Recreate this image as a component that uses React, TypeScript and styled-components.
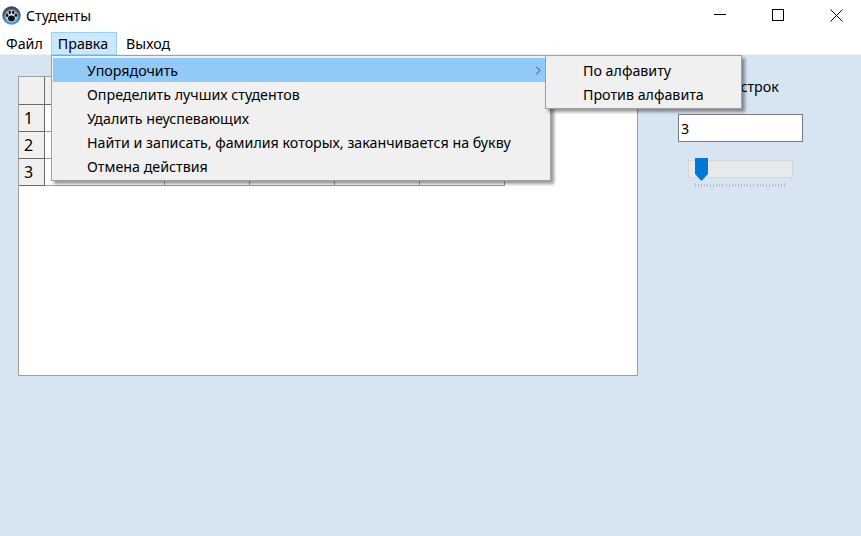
import { Fragment } from 'react'
import { createGlobalStyle, styled } from 'styled-components'

const Global = createGlobalStyle`
	html, body {
		margin: 0;
		padding: 0;
		background: #d7e4f2;
	}
`

const Window = styled.div`
	position: relative;
	width: 861px;
	height: 536px;
	overflow: hidden;
	display: flex;
	flex-direction: column;
	background: #d7e4f2;
	color: #000;
	font-family: 'Noto Sans', 'Liberation Sans', sans-serif;
	font-size: 14.25px;
`

const TitleBar = styled.div`
	height: 32px;
	flex: none;
	box-sizing: border-box;
	display: flex;
	align-items: center;
	padding: 0 0 2px 2px;
	background: #fff;
`

const Title = styled.span`
	margin-left: 5px;
`

const Caption = styled.div`
	margin-left: auto;
	margin-right: -5px;
	display: flex;
	height: 100%;
`

const CaptionButton = styled.div`
	width: 58.5px;
	display: flex;
	align-items: center;
	justify-content: center;
`

const MenuBar = styled.div`
	height: 23px;
	flex: none;
	display: flex;
	gap: 1px;
	background: #fff;
	border-bottom: 1px solid #f0f0f0;
	box-sizing: border-box;
`

const MenuTitle = styled.div<{ $open?: boolean }>`
	height: 23px;
	box-sizing: border-box;
	padding: 0 ${(p) => (p.$open ? '8px 0 6px' : '6px 0 7px')};
	display: flex;
	align-items: center;
	background: ${(p) => (p.$open ? '#cce8ff' : 'transparent')};
	border: 1px solid ${(p) => (p.$open ? '#99d1ff' : 'transparent')};

	&:first-child {
		margin-left: -2px;
	}
`

const Body = styled.div`
	flex: 1;
	display: flex;
	align-items: flex-start;
	padding: 21px 0 0 18px;
`

const GridView = styled.div`
	width: 620px;
	height: 300px;
	box-sizing: border-box;
	flex: none;
	background: #fff;
	border: 1px solid #a0a0a0;
	display: grid;
	grid-template-columns: 26px 120px repeat(4, 85px);
	grid-template-rows: 28px repeat(3, 27px);
	align-content: start;
	justify-content: start;
`

const HeaderCell = styled.div`
	box-sizing: border-box;
	background: #f0f0f0;
	border-right: 1px solid #696969;
	border-bottom: 1px solid #696969;
	padding-left: 5px;
	display: flex;
	align-items: center;
	font-size: 16px;
`

const Cell = styled.div`
	box-sizing: border-box;
	background: #fff;
	border-right: 1px solid #a0a0a0;
	border-bottom: 1px solid #a0a0a0;
`

const Side = styled.div`
	margin-left: 40px;
	width: 125px;
	display: flex;
	flex-direction: column;
`

const RowsLabel = styled.div`
	height: 38px;
	margin-left: -22px;
	white-space: nowrap;
	padding-top: 1px;
	box-sizing: border-box;
`

const CountInput = styled.div`
	height: 28px;
	box-sizing: border-box;
	background: #fff;
	border: 1px solid #7a7a7a;
	padding-left: 2px;
	display: flex;
	align-items: center;
`

const Slider = styled.div`
	position: relative;
	margin: 18px 0 0 10px;
	width: 105px;
	height: 27px;
`

const Track = styled.div`
	position: absolute;
	top: 0;
	left: 0;
	width: 105px;
	height: 18px;
	box-sizing: border-box;
	background: #e7eaea;
	border: 1px solid #d6d6d6;
`

const Thumb = styled.svg`
	position: absolute;
	left: 7px;
	top: -2px;
`

const Ticks = styled.svg`
	position: absolute;
	left: 7px;
	top: 23px;
`

const Menu = styled.div<{ $left: number; $width: number }>`
	position: absolute;
	top: 55px;
	left: ${(p) => p.$left}px;
	width: ${(p) => p.$width}px;
	box-sizing: border-box;
	padding: 2px 1px;
	background: #f0f0f0;
	border: 1px solid #a0a0a0;
	box-shadow: 3px 3px 3px rgba(0, 0, 0, 0.4);
`

const MenuItem = styled.div<{ $active?: boolean; $indent: number }>`
	position: relative;
	height: 24px;
	display: flex;
	align-items: center;
	white-space: nowrap;
	padding-left: ${(p) => p.$indent}px;
	background: ${(p) => (p.$active ? '#91c9f7' : 'transparent')};
`

const Arrow = styled.svg`
	position: absolute;
	right: 8px;
	top: 8px;
`

const ticks = Array.from({ length: 30 }, (_, i) => Math.floor(i * 3.1) + 0.5)
const columns = [0, 1, 2, 3, 4]

function App() {
	return (
		<Window>
			<Global />
			<TitleBar>
				<svg width="19" height="19" viewBox="0 0 20 20">
					<defs>
						<linearGradient id="ball" x1="0" y1="0" x2="0" y2="1">
							<stop offset="0" stopColor="#33404e" />
							<stop offset="0.5" stopColor="#4c6a86" />
							<stop offset="1" stopColor="#36a3dc" />
						</linearGradient>
						<radialGradient id="glow" cx="0.5" cy="0.5" r="0.5">
							<stop offset="0.55" stopColor="#d6e4ee" />
							<stop offset="1" stopColor="#d6e4ee" stopOpacity="0" />
						</radialGradient>
					</defs>
					<circle cx="10" cy="10" r="9.8" fill="url(#ball)" />
					<circle cx="10" cy="10.5" r="8" fill="url(#glow)" />
					<ellipse cx="10" cy="13" rx="3.6" ry="3" fill="#111" />
					<ellipse cx="5.4" cy="9.8" rx="1.3" ry="1.8" fill="#111" />
					<ellipse cx="8.2" cy="6.8" rx="1.3" ry="1.9" fill="#111" />
					<ellipse cx="11.8" cy="6.8" rx="1.3" ry="1.9" fill="#111" />
					<ellipse cx="14.6" cy="9.8" rx="1.3" ry="1.8" fill="#111" />
				</svg>
				<Title>Студенты</Title>
				<Caption>
					<CaptionButton>
						<svg width="12" height="12" viewBox="0 0 12 12">
							<path d="M0 5.5H12" stroke="#000" fill="none" />
						</svg>
					</CaptionButton>
					<CaptionButton>
						<svg width="12" height="12" viewBox="0 0 12 12">
							<rect x="0.5" y="0.5" width="11" height="11" stroke="#000" fill="none" />
						</svg>
					</CaptionButton>
					<CaptionButton>
						<svg width="13" height="13" viewBox="0 0 13 13">
							<path d="M0.5 0.5L12.5 12.5M12.5 0.5L0.5 12.5" stroke="#000" fill="none" />
						</svg>
					</CaptionButton>
				</Caption>
			</TitleBar>
			<MenuBar>
				<MenuTitle>Файл</MenuTitle>
				<MenuTitle $open>Правка</MenuTitle>
				<MenuTitle>Выход</MenuTitle>
			</MenuBar>
			<Body>
				<GridView>
					<HeaderCell />
					{columns.map((c) => (
						<HeaderCell key={c} />
					))}
					{[1, 2, 3].map((n) => (
						<Fragment key={n}>
							<HeaderCell>{n}</HeaderCell>
							{columns.map((c) => (
								<Cell key={c} />
							))}
						</Fragment>
					))}
				</GridView>
				<Side>
					<RowsLabel>Количество строк</RowsLabel>
					<CountInput>3</CountInput>
					<Slider>
						<Track />
						<Thumb width="13" height="23" viewBox="0 0 13 23">
							<path d="M0 0H13V16L6.5 23L0 16Z" fill="#0078d7" />
						</Thumb>
						<Ticks width="92" height="5" viewBox="0 0 92 5">
							{ticks.map((x, i) => (
								<path
									key={i}
									d={`M${x} ${i === 0 || i === 29 ? 0 : 1}V4`}
									stroke="#b9bdc2"
								/>
							))}
						</Ticks>
					</Slider>
				</Side>
			</Body>
			<Menu $left={51} $width={500}>
				<MenuItem $active $indent={34}>
					Упорядочить
					<Arrow width="6" height="9" viewBox="0 0 6 9">
						<path d="M1 0.5L5 4.5L1 8.5" stroke="#444" fill="none" />
					</Arrow>
				</MenuItem>
				<MenuItem $indent={34}>Определить лучших студентов</MenuItem>
				<MenuItem $indent={34}>Удалить неуспевающих</MenuItem>
				<MenuItem $indent={34}>Найти и записать, фамилия которых, заканчивается на букву</MenuItem>
				<MenuItem $indent={34}>Отмена действия</MenuItem>
			</Menu>
			<Menu $left={545} $width={197}>
				<MenuItem $indent={36}>По алфавиту</MenuItem>
				<MenuItem $indent={36}>Против алфавита</MenuItem>
			</Menu>
		</Window>
	)
}

export default App
